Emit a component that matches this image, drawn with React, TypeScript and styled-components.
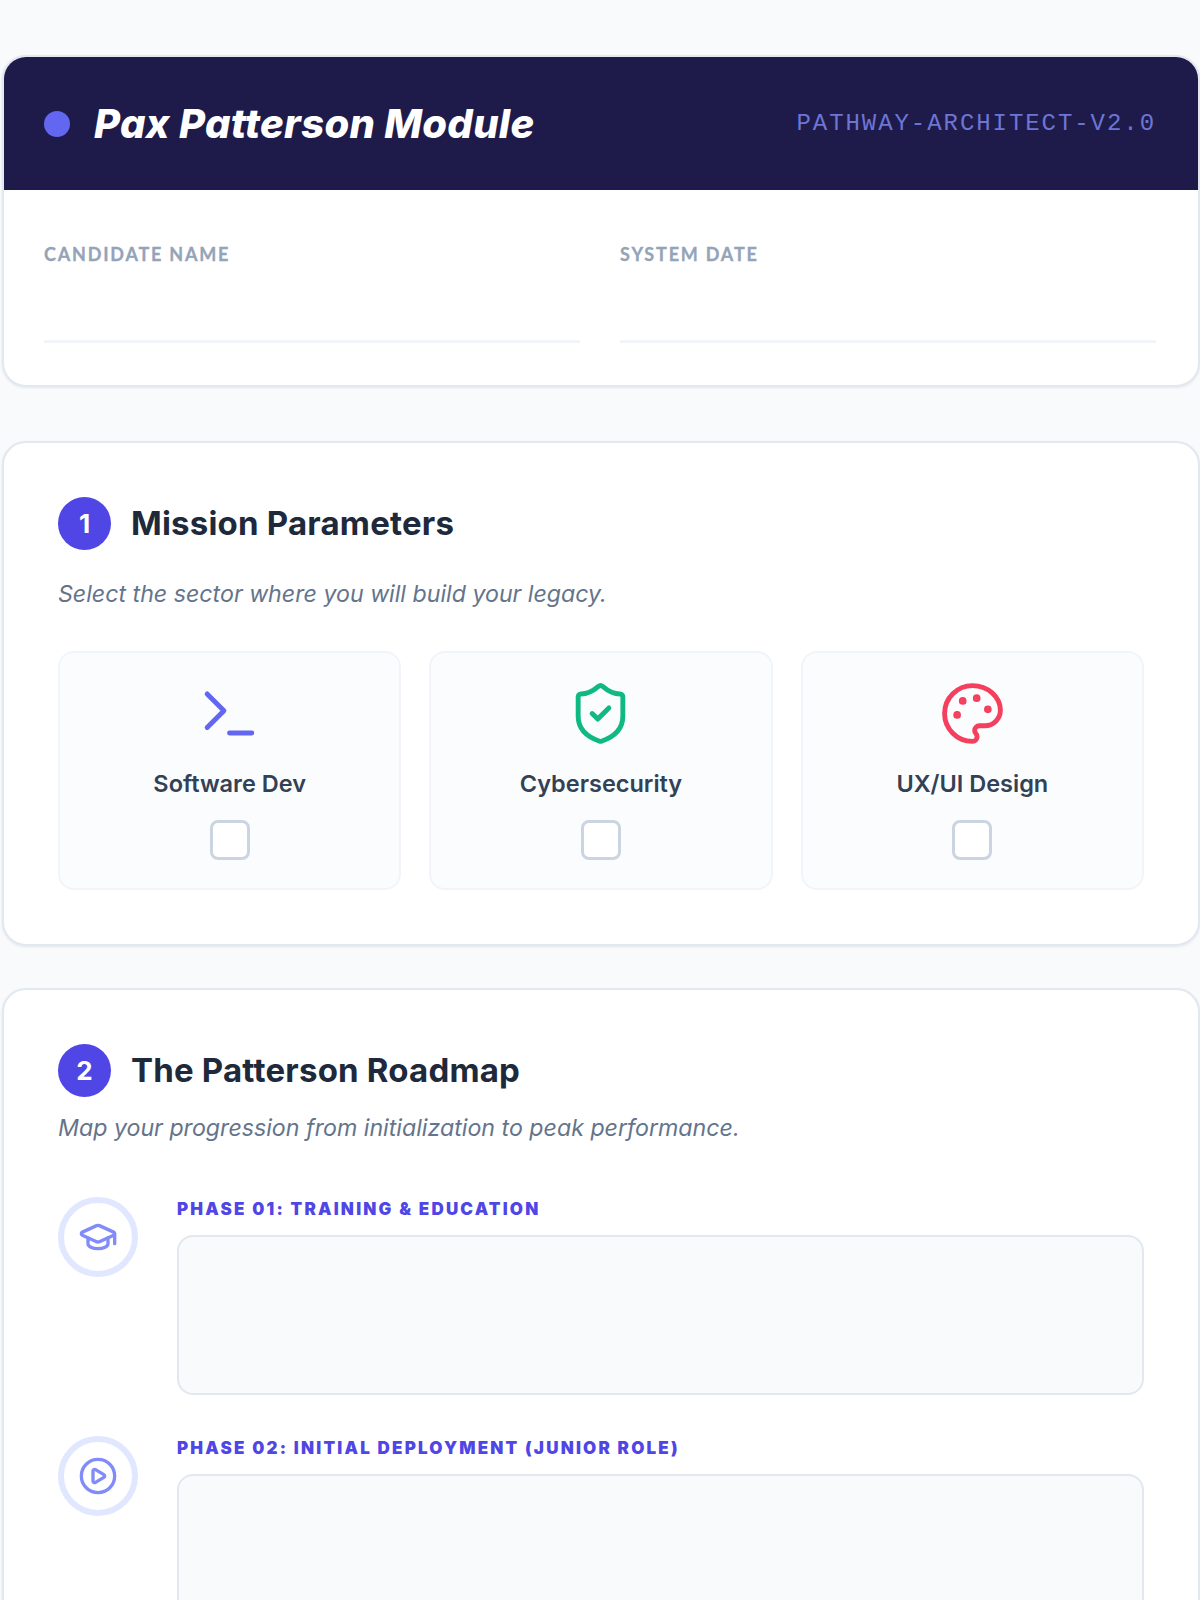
import React from "react";
import styled, { createGlobalStyle } from "styled-components";
import { Terminal, ShieldCheck, GraduationCap, CirclePlay } from "lucide-react";

const Global = createGlobalStyle`
  html, body { margin: 0; padding: 0; background: #f8fafc; }
  body { font-family: Inter, "Liberation Sans", sans-serif; }
  #root { height: 1600px; overflow: hidden; }
`;
const Page = styled.div`
  padding: 55px 0 0 2px;
  display: flex;
  flex-direction: column;
`;
const Card = styled.section<{ $mb: number }>`
  background: #fff;
  border: 2px solid #e2e8f0;
  border-radius: 24px;
  box-shadow: 0 1px 3px rgba(15, 23, 42, 0.08);
  margin-bottom: ${(p) => p.$mb}px;
  overflow: hidden;
`;
const Header = styled.header`
  background: #1e1b4b;
  height: 133px;
  padding: 0 42px 0 40px;
  display: flex;
  align-items: center;
  justify-content: space-between;
`;
const Brand = styled.div`
  display: flex;
  align-items: center;
  gap: 24px;
`;
const Dot = styled.span`
  width: 26px;
  height: 26px;
  border-radius: 50%;
  background: #6366f1;
`;
const Title = styled.h1`
  margin: 0;
  color: #fff;
  font: italic 800 40px/1 Inter, sans-serif;
  letter-spacing: 0.3px;
`;
const Code = styled.span`
  color: #6d75d5;
  font: 400 24px/1 "Liberation Mono", monospace;
  letter-spacing: 1.94px;
`;
const Fields = styled.div`
  display: grid;
  grid-template-columns: 1fr 1fr;
  gap: 40px;
  padding: 53px 42px 42px 40px;
`;
const Field = styled.div`
  display: flex;
  flex-direction: column;
`;
const FieldLabel = styled.label`
  color: #94a3b8;
  font: 700 18px/22px Lato, sans-serif;
  letter-spacing: 1.8px;
  -webkit-text-stroke: 0.3px #94a3b8;
`;
const FieldLine = styled.div`
  height: 75px;
  border-bottom: 3px solid #f1f5f9;
`;
const Body = styled.div`
  padding: 54px 54px 54px;
`;
const SectionHead = styled.div`
  display: flex;
  align-items: center;
  gap: 20px;
`;
const Num = styled.span`
  width: 53px;
  height: 53px;
  border-radius: 50%;
  background: #4f46e5;
  color: #fff;
  font: 700 26px/53px Inter, sans-serif;
  text-align: center;
`;
const SectionTitle = styled.h2`
  margin: 0;
  color: #1e293b;
  font: 700 33px/1.2 Inter, sans-serif;
  letter-spacing: 0.2px;
`;
const Sub = styled.p<{ $mt: number; $mb: number }>`
  margin: ${(p) => p.$mt}px 0 ${(p) => p.$mb}px;
  color: #64748b;
  font: italic 400 23.2px/32px Inter, sans-serif;
`;
const Options = styled.div`
  display: grid;
  grid-template-columns: repeat(3, 1fr);
  gap: 28px;
`;
const Option = styled.div`
  height: 239px;
  box-sizing: border-box;
  background: #fbfcfe;
  border: 2px solid #f1f5f9;
  border-radius: 16px;
  display: flex;
  flex-direction: column;
  align-items: center;
  padding-top: 27px;
`;
const OptionLabel = styled.span`
  margin-top: 21px;
  color: #334155;
  font: 600 23.5px/32px Inter, sans-serif;
`;
const Check = styled.span`
  margin-top: 20px;
  width: 40px;
  height: 40px;
  box-sizing: border-box;
  background: #fff;
  border: 3px solid #cbd5e1;
  border-radius: 8px;
`;
const Phase = styled.div`
  display: flex;
  gap: 39px;
  margin-bottom: 41px;
`;
const PhaseIcon = styled.div`
  flex: none;
  width: 80px;
  height: 80px;
  box-sizing: border-box;
  border: 6px solid #e0e7ff;
  border-radius: 50%;
  background: #fff;
  color: #818cf8;
  display: flex;
  align-items: center;
  justify-content: center;
`;
const PhaseMain = styled.div`
  flex: 1;
  display: flex;
  flex-direction: column;
`;
const PhaseLabel = styled.div`
  color: #4f46e5;
  font: 900 17px/24px Inter, sans-serif;
  letter-spacing: 2.2px;
  margin-bottom: 14px;
`;
const Area = styled.div`
  height: 160px;
  box-sizing: border-box;
  background: #f8fafc;
  border: 2px solid #e2e8f0;
  border-radius: 16px;
`;

const PaletteIcon = () => (
  <svg width="67" height="67" viewBox="0 0 24 24" fill="none" stroke="#f43f5e" strokeWidth="1.75" strokeLinecap="round" strokeLinejoin="round">
    <circle cx="13.5" cy="6.5" r=".5" fill="#f43f5e" />
    <circle cx="17.5" cy="10.5" r=".5" fill="#f43f5e" />
    <circle cx="8.5" cy="7.5" r=".5" fill="#f43f5e" />
    <circle cx="6.5" cy="12.5" r=".5" fill="#f43f5e" />
    <path d="M12 2C6.5 2 2 6.5 2 12s4.5 10 10 10c.926 0 1.648-.746 1.648-1.688 0-.437-.18-.835-.437-1.125-.29-.289-.438-.652-.438-1.125a1.64 1.64 0 0 1 1.668-1.668h1.996c3.051 0 5.555-2.503 5.555-5.554C21.965 6.012 17.461 2 12 2z" />
  </svg>
);

const options = [
  { label: "Software Dev", icon: <Terminal size={67} color="#6366f1" strokeWidth={1.75} /> },
  { label: "Cybersecurity", icon: <ShieldCheck size={67} color="#10b981" strokeWidth={1.75} /> },
  { label: "UX/UI Design", icon: <PaletteIcon /> },
];
const phases = [
  { label: "PHASE 01: TRAINING & EDUCATION", icon: <GraduationCap size={40} /> },
  { label: "PHASE 02: INITIAL DEPLOYMENT (JUNIOR ROLE)", icon: <CirclePlay size={40} /> },
];

export default function App() {
  return (
    <Page>
      <Global />
      <Card $mb={54}>
        <Header>
          <Brand>
            <Dot />
            <Title>Pax Patterson Module</Title>
          </Brand>
          <Code>PATHWAY-ARCHITECT-V2.0</Code>
        </Header>
        <Fields>
          <Field>
            <FieldLabel>CANDIDATE NAME</FieldLabel>
            <FieldLine />
          </Field>
          <Field>
            <FieldLabel>SYSTEM DATE</FieldLabel>
            <FieldLine />
          </Field>
        </Fields>
      </Card>
      <Card $mb={42}>
        <Body>
          <SectionHead>
            <Num>1</Num>
            <SectionTitle>Mission Parameters</SectionTitle>
          </SectionHead>
          <Sub $mt={28} $mb={41}>Select the sector where you will build your legacy.</Sub>
          <Options>
            {options.map((o) => (
              <Option key={o.label}>
                {o.icon}
                <OptionLabel>{o.label}</OptionLabel>
                <Check />
              </Option>
            ))}
          </Options>
        </Body>
      </Card>
      <Card $mb={0}>
        <Body>
          <SectionHead>
            <Num>2</Num>
            <SectionTitle>The Patterson Roadmap</SectionTitle>
          </SectionHead>
          <Sub $mt={15} $mb={53}>Map your progression from initialization to peak performance.</Sub>
          {phases.map((p) => (
            <Phase key={p.label}>
              <PhaseIcon>{p.icon}</PhaseIcon>
              <PhaseMain>
                <PhaseLabel>{p.label}</PhaseLabel>
                <Area />
              </PhaseMain>
            </Phase>
          ))}
        </Body>
      </Card>
    </Page>
  );
}
